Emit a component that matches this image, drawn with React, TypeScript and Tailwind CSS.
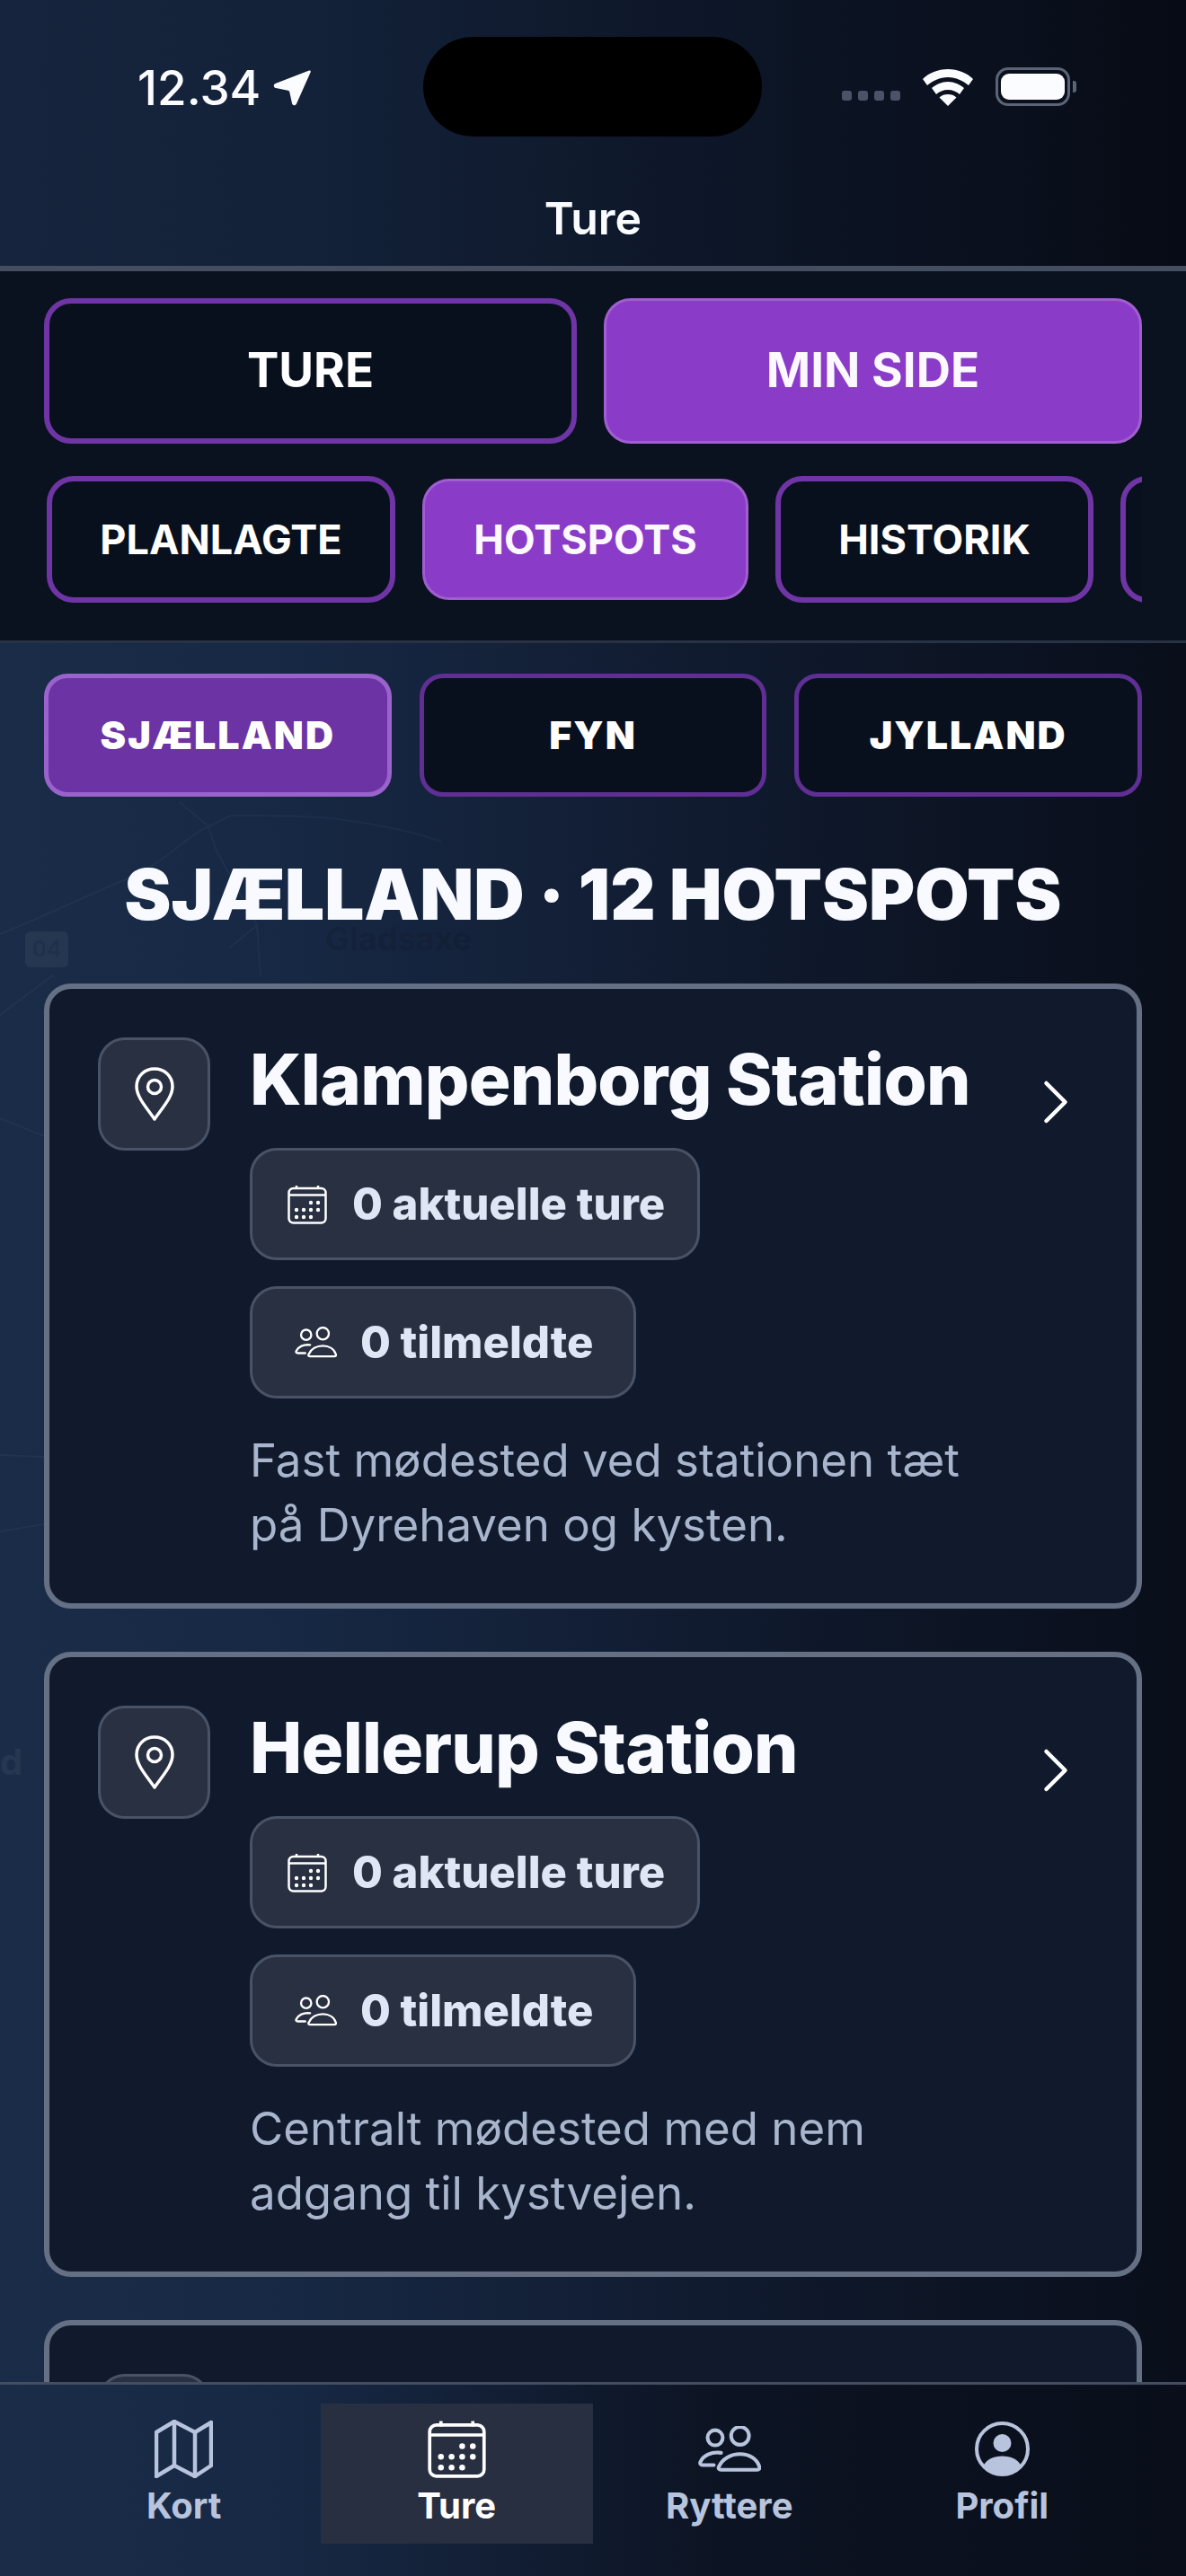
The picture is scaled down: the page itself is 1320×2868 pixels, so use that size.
import React from 'react';
import { ChevronRight } from 'lucide-react';

const font = { fontFamily: 'Inter, "Noto Sans", sans-serif' };

const hotspots = [
  { name: 'Klampenborg Station', lines: ['Fast mødested ved stationen tæt', 'på Dyrehaven og kysten.'] },
  { name: 'Hellerup Station', lines: ['Centralt mødested med nem', 'adgang til kystvejen.'] },
];

const CalendarIcon: React.FC<{ className?: string }> = ({ className }) => (
  <svg viewBox="0 0 44 44" className={className} fill="none" stroke="currentColor" strokeWidth="2.500">
    <rect x="1.500" y="4" width="41" height="38.500" rx="5" />
    <path d="M1.500 11.500h41M10 1v4M34 1v4" />
    <g fill="currentColor" stroke="none">
      <circle cx="26" cy="20" r="2.200" /><circle cx="34" cy="20" r="2.200" />
      <circle cx="10" cy="28" r="2.200" /><circle cx="18" cy="28" r="2.200" /><circle cx="26" cy="28" r="2.200" /><circle cx="34" cy="28" r="2.200" />
      <circle cx="10" cy="36" r="2.200" /><circle cx="18" cy="36" r="2.200" /><circle cx="26" cy="36" r="2.200" />
    </g>
  </svg>
);

const PeopleIcon: React.FC<{ className?: string; strokeWidth?: number }> = ({ className, strokeWidth = 2.4 }) => (
  <svg viewBox="0 0 48 35" className={className} fill="none" stroke="currentColor" strokeWidth={strokeWidth} strokeLinejoin="round" strokeLinecap="round">
    <circle cx="13" cy="9" r="5.800" />
    <circle cx="32" cy="7.500" r="6.800" />
    <path d="M17.500 20.500C10 19.500 4 22.500 1.700 27.500c-.5 1.300.2 2.300 1.600 2.300H12" />
    <path d="M17.500 33.500c-1.500 0-2.300-1-1.700-2.300C18.500 25 25 21.500 32 21.500s13 3.500 14.800 9.700c.4 1.300-.3 2.300-1.700 2.300z" />
  </svg>
);

const Card: React.FC<{ name?: string; lines?: string[] }> = ({ name, lines }) => (
  <div className="mx-[49px] flex h-[696px] shrink-0 gap-[44px] rounded-[30px] border-[6px] border-[#667085] bg-[#101a2c] pl-[54px] pr-[60px] pt-[54px]">
    <div className="flex h-[126px] w-[125px] shrink-0 items-center justify-center rounded-[30px] border-[3px] border-[#4a5366] bg-[#283041] text-white">
      <svg viewBox="0 0 44 60" className="h-[60px] w-[44px]" fill="none" stroke="currentColor" strokeWidth="3.500" strokeLinejoin="round">
        <path d="M22 58C14 46 2 34 2 21.500 2 10 11 2 22 2s20 8 20 19.500C42 34 30 46 22 58z" />
        <circle cx="22" cy="22" r="7.500" />
      </svg>
    </div>
    {name && lines && (
      <div className="min-w-0 flex-1">
        <div className="flex h-[94px] items-start justify-between">
          <h3 className="whitespace-nowrap text-[78px] font-extrabold leading-[94px] tracking-[-0.8px] text-[#f8faff]">{name}</h3>
          <ChevronRight className="mr-[-12px] mt-[30px] h-[84px] w-[84px] shrink-0 text-white" strokeWidth={1.3} />
        </div>
        <div className="mt-[29px] flex flex-col items-start gap-[29px]">
          <div className="flex h-[125px] items-center gap-[28px] rounded-[30px] border-[3px] border-[#4a5366] bg-[#283041] pl-[39px] pr-[36px]">
            <CalendarIcon className="h-[44px] w-[44px] text-white" />
            <span className="text-[49px] font-extrabold text-[#dfe6f5]">0 aktuelle ture</span>
          </div>
          <div className="flex h-[125px] items-center gap-[26px] rounded-[30px] border-[3px] border-[#4a5366] bg-[#283041] pl-[47px] pr-[45px]">
            <PeopleIcon className="h-[35px] w-[47px] text-white" />
            <span className="text-[49px] font-extrabold text-[#dfe6f5]">0 tilmeldte</span>
          </div>
        </div>
        <p className="mt-[33px] whitespace-nowrap text-[51px] leading-[72px] text-[#a9b5cc]">
          {lines[0]}
          <br />
          {lines[1]}
        </p>
      </div>
    )}
  </div>
);

const TabButton: React.FC<{ label: string; active?: boolean; className: string }> = ({ label, active, className }) => (
  <button
    className={
      active
        ? `flex shrink-0 items-center justify-center border-[3px] border-[#a05ed0] bg-[#8a3cc8] font-bold text-[#fbf8ff] ${className}`
        : `flex shrink-0 items-center justify-center border-[6px] border-[#6f35a5] bg-[#09101d] font-bold text-white ${className}`
    }
  >
    {label}
  </button>
);

const navIcon = 'flex h-[65px] items-center justify-center';
const navLabel = 'mt-[5px] text-[40px] font-bold leading-[52px]';

export default function App() {
  return (
    <div
      style={font}
      className="relative flex h-[2868px] w-[1320px] flex-col overflow-hidden bg-[linear-gradient(90deg,#1a2c48_0%,#172844_25%,#101a2e_62%,#090e1a_100%)]"
    >
      {/* faint map behind the list */}
      <svg viewBox="0 0 1320 2868" className="absolute inset-0 h-full w-full" fill="none" stroke="#8aa4c8" strokeOpacity="0.06" strokeWidth="2">
        <path d="M0 1040C50 1020 90 1000 138 980s70-50 94-60 20-12 27-12c50 0 90 0 125 5s80 14 107 24M200 893l32 27 9 27 45 83 4 57M286 1030l-30 25M0 1130l60-45M0 1245l49 20M0 1620l49 2M0 1705l49-8" />
      </svg>
      <span className="absolute left-[362px] top-[1031px] text-[36px] font-bold leading-[28px] text-black/10">Gladsaxe</span>
      <span className="absolute left-[28px] top-[1037px] flex h-[40px] w-[48px] items-center justify-center rounded-[6px] bg-white/5 text-[24px] font-bold text-black/10">04</span>
      <span className="absolute left-0 top-[1932px] text-[40px] font-bold text-white/5">d</span>

      {/* status bar */}
      <div className="relative flex h-[197px] shrink-0 items-start justify-between bg-black/15 pl-[153px] pr-[122px]">
        <div className="mt-[74px] flex items-center gap-[14px]">
          <span className="text-[53px] font-medium leading-[48px] text-[#fbfcff]">12.34</span>
          <svg viewBox="0 0 42 42" className="h-[42px] w-[42px] text-[#fbfcff]" fill="currentColor">
            <path d="M40 1.500c1.200-.4 2.200.6 1.700 1.800L26 38.500c-1.200 2.600-4.500 2.200-5-.5l-2.700-12.500c-.2-1-.8-1.600-1.800-1.800L3 21c-2.800-.6-3-4-.5-5z" />
          </svg>
        </div>
        <div className="absolute left-[471px] top-[41px] h-[111px] w-[377px] rounded-[56px] bg-black" />
        <div className="mt-[75px] flex items-end gap-[24px]">
          <div className="mb-[6px] flex gap-[7px]">
            {[0, 1, 2, 3].map((i) => (
              <span key={i} className="h-[11px] w-[11px] rounded-[3px] bg-[#4c5366]" />
            ))}
          </div>
          <svg viewBox="0 0 58 42" className="h-[42px] w-[58px] text-[#fbfcff]" fill="currentColor">
            <path d="M29 1C18 1 8 5 1 12l5 7c6-5 14-9 23-9s17 4 23 9l5-7C50 5 40 1 29 1z" />
            <path d="M29 15c-7 0-13 3-18 7l5 7c3-3 8-5 13-5s10 2 13 5l5-7c-5-4-11-7-18-7z" />
            <path d="M29 29c-4 0-7 1-9.500 3.500L29 42l9.500-9.500C36 30 33 29 29 29z" />
          </svg>
          <div className="flex items-center">
            <div className="flex h-[43px] w-[83px] items-center justify-center rounded-[14px] border-[3.500px] border-[#5c6578]">
              <div className="h-[29px] w-[71px] rounded-[9px] bg-[#fbfcff]" />
            </div>
            <div className="ml-[3px] h-[13px] w-[4px] rounded-r-[3px] bg-[#5c6578]" />
          </div>
        </div>
      </div>

      {/* nav title */}
      <div className="relative flex h-[105px] shrink-0 items-start justify-center border-b-[6px] border-[#454d60] bg-black/15">
        <span className="mt-[13px] text-[50px] font-semibold leading-[66px] text-[#fbfcff]">Ture</span>
      </div>

      {/* tabs */}
      <div className="relative h-[414px] shrink-0 border-b-[3px] border-[#283244] bg-[#0a1220] px-[49px] pt-[30px]">
        <div className="flex gap-[30px]">
          <TabButton label="TURE" className="h-[162px] w-[593px] rounded-[30px] text-[53px]" />
          <TabButton label="MIN SIDE" active className="h-[162px] w-[599px] rounded-[30px] text-[53px]" />
        </div>
        <div className="mt-[36px] flex h-[141px] items-center gap-[30px] overflow-hidden pl-[3px]">
          <TabButton label="PLANLAGTE" className="h-[141px] w-[388px] rounded-[30px] text-[45px]" />
          <TabButton label="HOTSPOTS" active className="h-[135px] w-[363px] rounded-[30px] text-[45px]" />
          <TabButton label="HISTORIK" className="h-[141px] w-[354px] rounded-[30px] text-[45px]" />
          <TabButton label="" className="h-[141px] w-[120px] rounded-[30px]" />
        </div>
      </div>

      {/* hotspot list, runs under the bottom bar */}
      <div className="relative min-h-0 flex-1 overflow-hidden pt-[34px]">
        <div className="flex gap-[31px] px-[49px]">
          {['SJÆLLAND', 'FYN', 'JYLLAND'].map((region, i) => (
            <button
              key={region}
              className={
                i === 0
                  ? 'flex h-[137px] w-[387px] items-center justify-center rounded-[26px] border-[5px] border-[#9a62cc] bg-[#6b33a3] text-[43px] font-black tracking-[2px] text-white'
                  : 'flex h-[137px] w-[387px] items-center justify-center rounded-[26px] border-[5px] border-[#5f2f94] bg-[#09101d] text-[43px] font-black tracking-[2px] text-white'
              }
            >
              {region}
            </button>
          ))}
        </div>
        <h2 className="mt-[74px] text-center text-[78px] font-black leading-[70px] text-[#f8faff]">SJÆLLAND · 12 HOTSPOTS</h2>
        <div className="mt-[64px] flex flex-col gap-[48px]">
          {hotspots.map((h) => (
            <Card key={h.name} name={h.name} lines={h.lines} />
          ))}
          <Card />
        </div>
      </div>

      {/* bottom bar */}
      <div className="relative grid h-[216px] shrink-0 grid-cols-4 border-t-[3px] border-[#454d60] bg-[linear-gradient(90deg,#1a2c48_0%,#172844_25%,#0c1322_62%,#090e1a_100%)] px-[53px] pt-[21px]">
        <div className="flex h-[156px] flex-col items-center pt-[18px] text-[#b8c4dd]">
          <div className={navIcon}>
            <svg viewBox="0 0 65 65" className="h-[65px] w-[65px]" fill="none" stroke="currentColor" strokeWidth="4.500" strokeLinejoin="round" strokeLinecap="round">
              <path d="M22 2 2 14v49l20-12 23 12 18-12V3L45 14z" />
              <path d="M22 2v49M45 14v49" />
            </svg>
          </div>
          <span className={navLabel}>Kort</span>
        </div>
        <div className="flex h-[156px] flex-col items-center bg-[#282f40] pt-[18px] text-white">
          <div className={navIcon}>
            <CalendarIcon className="h-[65px] w-[65px]" />
          </div>
          <span className={navLabel}>Ture</span>
        </div>
        <div className="flex h-[156px] flex-col items-center pt-[18px] text-[#b8c4dd]">
          <div className={navIcon}>
            <PeopleIcon className="h-[51px] w-[70px]" strokeWidth={2.8} />
          </div>
          <span className={navLabel}>Ryttere</span>
        </div>
        <div className="flex h-[156px] flex-col items-center pt-[18px] text-[#b8c4dd]">
          <div className={navIcon}>
            <svg viewBox="0 0 61 61" className="h-[61px] w-[61px]" fill="none">
              <circle cx="30.500" cy="30.500" r="28.500" stroke="currentColor" strokeWidth="4" />
              <circle cx="30.500" cy="24" r="10" fill="currentColor" />
              <path d="M9 50c4-8 12-11.500 21.500-11.500S48 42 52 50c-5 6-13 9-21.500 9S14 56 9 50z" fill="currentColor" />
            </svg>
          </div>
          <span className={navLabel}>Profil</span>
        </div>
      </div>
    </div>
  );
}
